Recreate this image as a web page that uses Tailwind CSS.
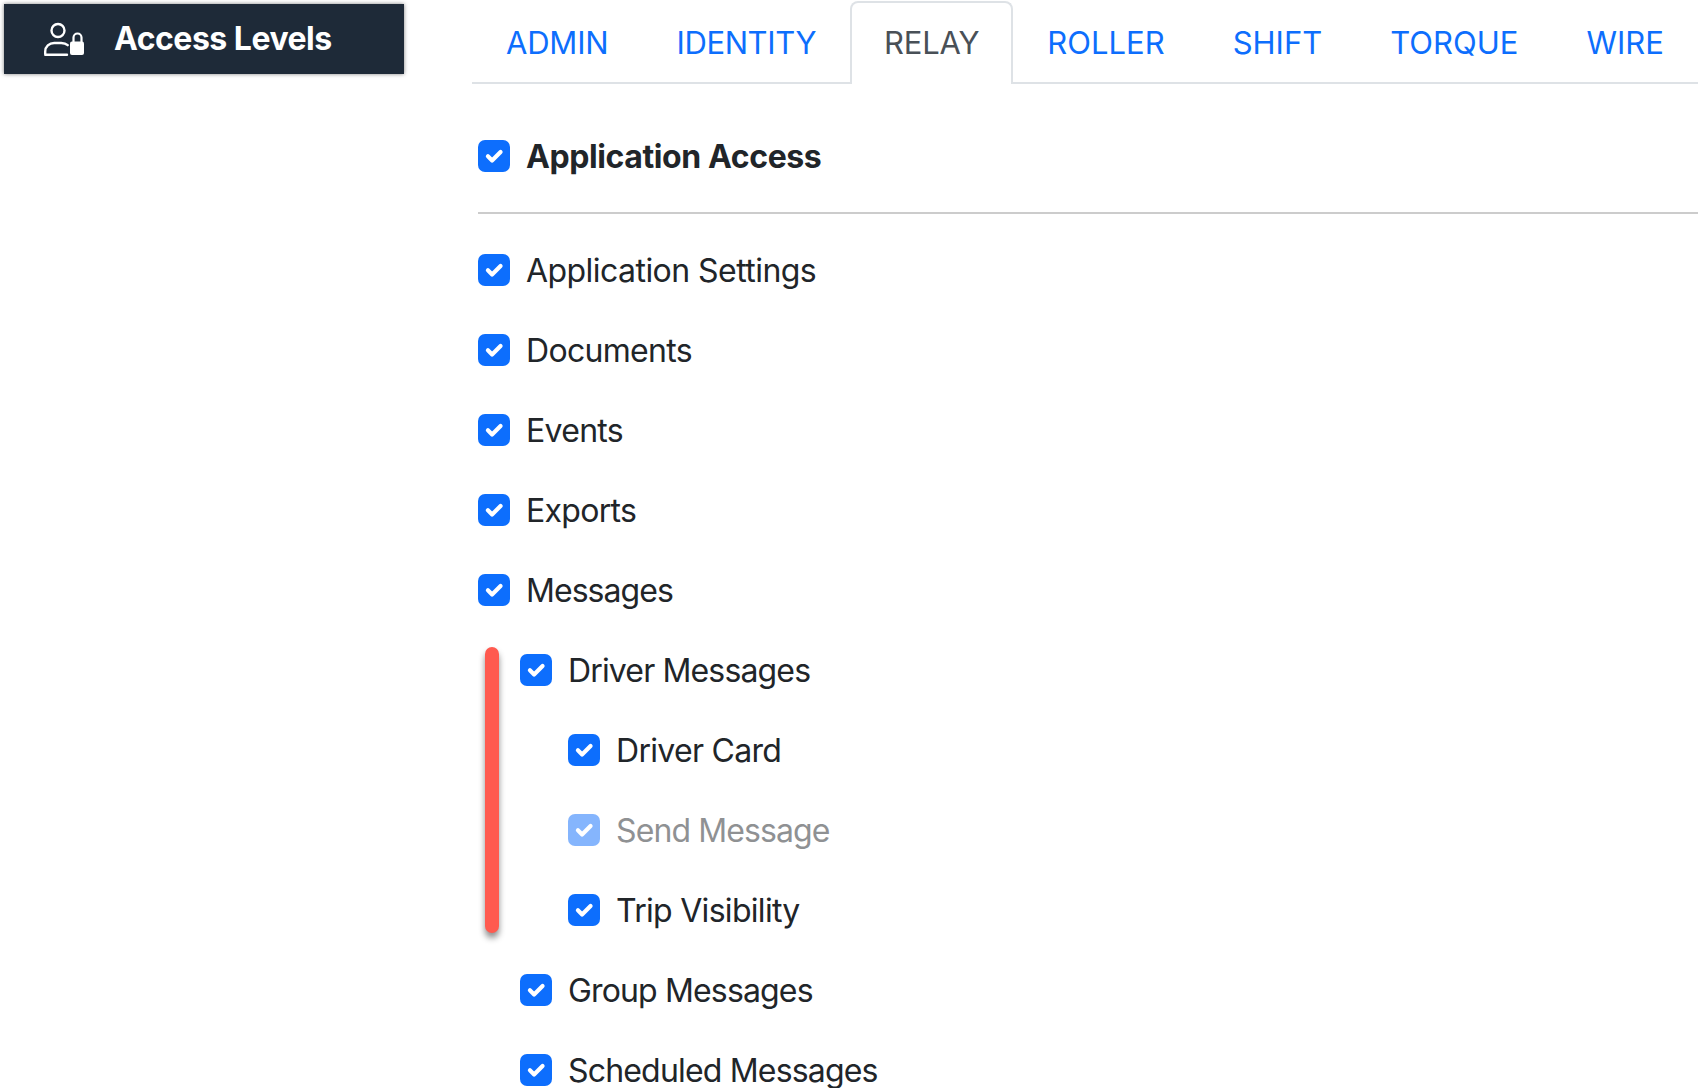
<!DOCTYPE html>
<html lang="en">
<head>
  <meta charset="UTF-8" />
  <title>Access Levels</title>
  <script src="https://cdn.jsdelivr.net/npm/@tailwindcss/browser@4"></script>
</head>
<body class="bg-white h-screen overflow-hidden font-['Inter',sans-serif] text-[32px] leading-[48px] tracking-[-0.7px] text-[#212529]">
  <div class="flex h-full">
    <!-- sidebar -->
    <aside class="w-[472px] shrink-0 pl-[4px] pt-[4px]">
      <div class="w-[400px] h-[70px] bg-[#1e2a38] shadow-[0_0_4px_rgba(0,0,0,0.5)] flex items-center pl-[40px] text-white">
        <svg class="w-[42px] h-[36px] shrink-0" viewBox="0 0 42 36" fill="none">
          <circle cx="14" cy="9.5" r="6.5" stroke="white" stroke-width="2.4" />
          <path d="M1.2 33v-2.500c0-5 4-8.500 9-8.500h7c3 0 5 .8 6.500 2.200M1.200 33.800h21.800" stroke="white" stroke-width="2.400" stroke-linecap="round" />
          <path d="M29.500 21v-4.500a4 4 0 0 1 8 0V21" stroke="white" stroke-width="2.200" />
          <rect x="26" y="20.500" width="14" height="13.500" rx="2" fill="white" />
        </svg>
        <span class="ml-[28px] font-bold tracking-[-0.5px]">Access Levels</span>
      </div>
    </aside>

    <main class="flex-1 min-w-0">
      <!-- tabs -->
      <nav class="flex h-[84px] pt-[1px] border-b-2 border-[#dee2e6] text-[31px] tracking-[-0.2px] text-[#0d6efd] whitespace-nowrap">
        <a class="px-[34px] pt-[18px]">ADMIN</a>
        <a class="px-[34px] pt-[18px] tracking-[-0.38px]">IDENTITY</a>
        <a class="px-[32px] pt-[16px] h-[83px] bg-white border-2 border-b-0 border-[#dee2e6] rounded-t-[8px] text-[#495057]">RELAY</a>
        <a class="px-[34px] pt-[18px] tracking-[0px]">ROLLER</a>
        <a class="px-[34px] pt-[18px] tracking-[0px]">SHIFT</a>
        <a class="px-[34px] pt-[18px] tracking-[0px]">TORQUE</a>
        <a class="px-[34px] pt-[18px] tracking-[0px]">WIRE</a>
      </nav>

      <div class="relative pl-[6px]">
        <label class="flex items-center h-[80px] mt-[32px] font-bold tracking-[-0.4px]">
          <span class="w-[32px] h-[32px] rounded-[7px] bg-[#0d6efd] flex items-center justify-center shrink-0"><svg class="w-[32px] h-[32px]" viewBox="0 0 20 20" fill="none"><path d="M6.200 10.200l2.600 2.600l5.300-5.300" stroke="white" stroke-width="2.600" stroke-linecap="round" stroke-linejoin="round" /></svg></span>
          <span class="ml-[16px] pt-[2px]">Application Access</span>
        </label>
        <hr class="border-0 h-[2px] bg-[#cccccc] mt-[16px] mb-[17px]" />

        <label class="flex items-center h-[80px]">
          <span class="w-[32px] h-[32px] -mt-[2px] rounded-[7px] bg-[#0d6efd] flex items-center justify-center shrink-0"><svg class="w-[32px] h-[32px]" viewBox="0 0 20 20" fill="none"><path d="M6.200 10.200l2.600 2.600l5.300-5.300" stroke="white" stroke-width="2.600" stroke-linecap="round" stroke-linejoin="round" /></svg></span>
          <span class="ml-[16px] tracking-[-0.55px]">Application Settings</span>
        </label>
        <label class="flex items-center h-[80px]">
          <span class="w-[32px] h-[32px] -mt-[2px] rounded-[7px] bg-[#0d6efd] flex items-center justify-center shrink-0"><svg class="w-[32px] h-[32px]" viewBox="0 0 20 20" fill="none"><path d="M6.200 10.200l2.600 2.600l5.300-5.300" stroke="white" stroke-width="2.600" stroke-linecap="round" stroke-linejoin="round" /></svg></span>
          <span class="ml-[16px]">Documents</span>
        </label>
        <label class="flex items-center h-[80px]">
          <span class="w-[32px] h-[32px] -mt-[2px] rounded-[7px] bg-[#0d6efd] flex items-center justify-center shrink-0"><svg class="w-[32px] h-[32px]" viewBox="0 0 20 20" fill="none"><path d="M6.200 10.200l2.600 2.600l5.300-5.300" stroke="white" stroke-width="2.600" stroke-linecap="round" stroke-linejoin="round" /></svg></span>
          <span class="ml-[16px]">Events</span>
        </label>
        <label class="flex items-center h-[80px]">
          <span class="w-[32px] h-[32px] -mt-[2px] rounded-[7px] bg-[#0d6efd] flex items-center justify-center shrink-0"><svg class="w-[32px] h-[32px]" viewBox="0 0 20 20" fill="none"><path d="M6.200 10.200l2.600 2.600l5.300-5.300" stroke="white" stroke-width="2.600" stroke-linecap="round" stroke-linejoin="round" /></svg></span>
          <span class="ml-[16px]">Exports</span>
        </label>
        <label class="flex items-center h-[80px]">
          <span class="w-[32px] h-[32px] -mt-[2px] rounded-[7px] bg-[#0d6efd] flex items-center justify-center shrink-0"><svg class="w-[32px] h-[32px]" viewBox="0 0 20 20" fill="none"><path d="M6.200 10.200l2.600 2.600l5.300-5.300" stroke="white" stroke-width="2.600" stroke-linecap="round" stroke-linejoin="round" /></svg></span>
          <span class="ml-[16px] tracking-[-0.95px]">Messages</span>
        </label>

        <!-- nested under Messages -->
        <div class="relative pl-[42px]">
          <div class="absolute left-[7px] top-[16px] w-[14px] h-[286px] rounded-full bg-[#ff5a4f] shadow-[0_5px_6px_rgba(0,0,0,0.45)]"></div>
          <label class="flex items-center h-[80px]">
            <span class="w-[32px] h-[32px] -mt-[2px] rounded-[7px] bg-[#0d6efd] flex items-center justify-center shrink-0"><svg class="w-[32px] h-[32px]" viewBox="0 0 20 20" fill="none"><path d="M6.200 10.200l2.600 2.600l5.300-5.300" stroke="white" stroke-width="2.600" stroke-linecap="round" stroke-linejoin="round" /></svg></span>
            <span class="ml-[16px] tracking-[-0.85px]">Driver Messages</span>
          </label>
          <div class="pl-[48px]">
            <label class="flex items-center h-[80px]">
              <span class="w-[32px] h-[32px] -mt-[2px] rounded-[7px] bg-[#0d6efd] flex items-center justify-center shrink-0"><svg class="w-[32px] h-[32px]" viewBox="0 0 20 20" fill="none"><path d="M6.200 10.200l2.600 2.600l5.300-5.300" stroke="white" stroke-width="2.600" stroke-linecap="round" stroke-linejoin="round" /></svg></span>
              <span class="ml-[16px]">Driver Card</span>
            </label>
            <label class="flex items-center h-[80px] opacity-50">
              <span class="w-[32px] h-[32px] -mt-[2px] rounded-[7px] bg-[#0d6efd] flex items-center justify-center shrink-0"><svg class="w-[32px] h-[32px]" viewBox="0 0 20 20" fill="none"><path d="M6.200 10.200l2.600 2.600l5.300-5.300" stroke="white" stroke-width="2.600" stroke-linecap="round" stroke-linejoin="round" /></svg></span>
              <span class="ml-[16px] tracking-[-0.9px]">Send Message</span>
            </label>
            <label class="flex items-center h-[80px]">
              <span class="w-[32px] h-[32px] -mt-[2px] rounded-[7px] bg-[#0d6efd] flex items-center justify-center shrink-0"><svg class="w-[32px] h-[32px]" viewBox="0 0 20 20" fill="none"><path d="M6.200 10.200l2.600 2.600l5.300-5.300" stroke="white" stroke-width="2.600" stroke-linecap="round" stroke-linejoin="round" /></svg></span>
              <span class="ml-[16px]">Trip Visibility</span>
            </label>
          </div>
          <label class="flex items-center h-[80px]">
            <span class="w-[32px] h-[32px] -mt-[2px] rounded-[7px] bg-[#0d6efd] flex items-center justify-center shrink-0"><svg class="w-[32px] h-[32px]" viewBox="0 0 20 20" fill="none"><path d="M6.200 10.200l2.600 2.600l5.300-5.300" stroke="white" stroke-width="2.600" stroke-linecap="round" stroke-linejoin="round" /></svg></span>
            <span class="ml-[16px] tracking-[-0.85px]">Group Messages</span>
          </label>
          <label class="flex items-center h-[80px]">
            <span class="w-[32px] h-[32px] -mt-[2px] rounded-[7px] bg-[#0d6efd] flex items-center justify-center shrink-0"><svg class="w-[32px] h-[32px]" viewBox="0 0 20 20" fill="none"><path d="M6.200 10.200l2.600 2.600l5.300-5.300" stroke="white" stroke-width="2.600" stroke-linecap="round" stroke-linejoin="round" /></svg></span>
            <span class="ml-[16px] tracking-[-0.82px]">Scheduled Messages</span>
          </label>
        </div>
      </div>
    </main>
  </div>
</body>
</html>
